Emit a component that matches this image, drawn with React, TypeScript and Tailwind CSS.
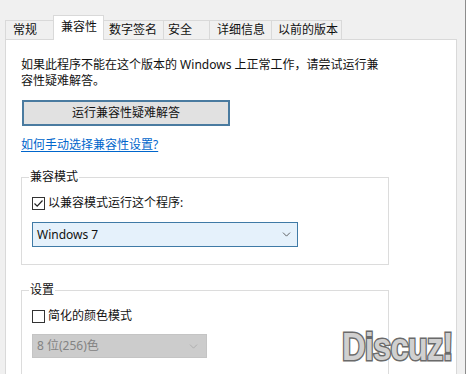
import { ChevronDown } from 'lucide-react'

const font = "font-['Noto_Sans','Noto_Sans_CJK_SC',sans-serif]"

function Tab({ label, className }: { label: string; className: string }) {
  return (
    <div
      className={`flex h-[19px] items-center border-t border-l border-[#d9d9d9] bg-[#f0f0f0] leading-[16px] ${className}`}
    >
      {label}
    </div>
  )
}

function Checkbox({ checked }: { checked?: boolean }) {
  return (
    <span className="flex h-[13px] w-[13px] items-center justify-center border border-[#333333] bg-white">
      {checked && (
        <svg width="11" height="11" viewBox="0 0 11 11" fill="none">
          <path d="M1.5 5.5 L4.2 8.2 L9.5 2.5" stroke="#222" strokeWidth="1.2" />
        </svg>
      )}
    </span>
  )
}

export default function App() {
  return (
    <div className={`relative flex h-[374px] w-[467px] overflow-hidden bg-white text-[12px] text-[#111] ${font}`}>
      <div className="flex w-[465px] shrink-0 flex-col bg-[#f0f0f0]">
        {/* tab strip */}
        <div className="flex h-[39px] shrink-0 items-end pl-[5px]">
          <Tab label="常规" className="w-[48px] pl-[7px]" />
          <div className="relative z-10 -mb-px h-[25px] w-[51px] border-x border-t border-[#d9d9d9] bg-white pt-[3px] pl-[7px] leading-[16px]">
            兼容性
          </div>
          <Tab label="数字签名" className="w-[59px] border-l-0 pl-[5px]" />
          <Tab label="安全" className="w-[46px] pl-[4px]" />
          <Tab label="详细信息" className="w-[62px] pl-[7px]" />
          <Tab label="以前的版本" className="w-[71px] border-r pl-[6px]" />
        </div>

        {/* page */}
        <div className="ml-[5px] w-[452px] shrink-0 border-x border-t border-[#d9d9d9] bg-white pt-[17px] pl-[15px] leading-[16px]">
          <p>
            <span className="block">如果此程序不能在这个版本的 Windows 上正常工作，请尝试运行兼</span>
            <span className="block">容性疑难解答。</span>
          </p>

          <button className="mt-[11px] ml-px h-[26px] w-[208px] border-2 border-[#4a7ba0] bg-[#e1e1e1] text-[12px] leading-[16px]">
            运行兼容性疑难解答
          </button>

          <div className="mt-[11px]">
            <a href="#" className="text-[#0066cc] underline underline-offset-2">
              如何手动选择兼容性设置?
            </a>
          </div>

          <fieldset className="mt-[16px] w-[368px] border border-[#dcdcdc] px-[10px] pb-[17px]">
            <legend className="-ml-[3px] px-[1px]">兼容模式</legend>
            <label className="mt-[10px] flex items-center gap-[3px]">
              <Checkbox checked />
              以兼容模式运行这个程序:
            </label>
            <div className="mt-[11px] flex h-[25px] w-[266px] items-center justify-between border border-[#3f7aa6] bg-[#e5f1fb] pr-[4px] pl-[4px]">
              <span>Windows 7</span>
              <ChevronDown size={13} strokeWidth={1.5} className="text-[#444]" />
            </div>
          </fieldset>

          <fieldset className="mt-[17px] h-[140px] w-[368px] border border-[#dcdcdc] px-[10px]">
            <legend className="-ml-[3px] px-[1px]">设置</legend>
            <label className="mt-[10px] flex items-center gap-[3px]">
              <Checkbox />
              简化的颜色模式
            </label>
            <div className="mt-[10px] flex h-[24px] w-[175px] items-center justify-between border border-[#c4c4c4] bg-[#cccccc] pr-[6px] pl-[4px] text-[#838383]">
              <span>8 位(256)色</span>
              <ChevronDown size={13} strokeWidth={1.5} className="text-[#a8a8a8]" />
            </div>
          </fieldset>
        </div>
      </div>
      <div className="w-px shrink-0 bg-[#8c8c8c]" />

      {/* forum watermark */}
      <div className="absolute top-[325px] left-[342px] origin-left scale-x-[0.84] font-['Liberation_Sans',sans-serif] text-[39px] leading-[44px] font-bold tracking-[-1px] text-[#d0d0d0] [-webkit-text-stroke:3px_#6a6a6a] [paint-order:stroke_fill]">
        Discuz!
      </div>
    </div>
  )
}
